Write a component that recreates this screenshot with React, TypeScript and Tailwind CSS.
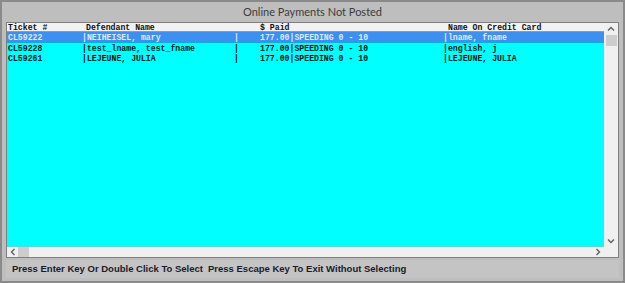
const mono = { fontFamily: '"Liberation Mono", "Courier New", monospace' };

type Row = { ticket: string; name: string; paid: string; card: string; selected?: boolean };

const rows: Row[] = [
  { ticket: 'CL59222', name: '|NEIHEISEL, mary', paid: '177.00|SPEEDING 0 - 10', card: '|lname, fname', selected: true },
  { ticket: 'CL59228', name: '|test_lname, test_fname', paid: '177.00|SPEEDING 0 - 10', card: '|english, j' },
  { ticket: 'CL59261', name: '|LEJEUNE, JULIA', paid: '177.00|SPEEDING 0 - 10', card: '|LEJEUNE, JULIA' },
];

function ListRow({ r }: { r: Row }) {
  return (
    <div
      className={`flex items-center whitespace-pre pt-[2px] font-bold leading-none ${
        r.selected ? 'h-[11px] bg-[#3d8ff0] text-[#dfe9ff]' : 'h-[10px] text-[#101010]'
      }`}
    >
      <span className="w-[75px] pl-[1px]">{r.ticket}</span>
      <span className="w-[152px]">{r.name}</span>
      <span className="w-[26px]">|</span>
      <span className="w-[183px]">{r.paid}</span>
      <span>{r.card}</span>
    </div>
  );
}

export default function App() {
  return (
    <div
      className="flex h-[283px] w-[625px] flex-col border-2 border-[#8a8a8a] bg-[#bebebe]"
      style={{ fontFamily: '"Liberation Sans", Arial, sans-serif' }}
    >
      <div className="flex h-[20px] items-center justify-center pt-[1px] text-[11px] text-[#3c3c3c]" style={{ fontFamily: 'Lato, "Noto Sans", sans-serif' }}>
        Online Payments Not Posted
      </div>
      <div className="mx-[4px] flex h-[236px] flex-col border border-[#7f7f7f] bg-[#f0f0f0]">
        <div className="flex min-h-0 flex-1">
          <div className="flex flex-1 flex-col text-[8.2px]" style={mono}>
            <div className="flex h-[9px] items-center whitespace-pre border-b border-[#9a9a9a] bg-[#f2f2f2] pt-[3px] font-bold leading-none text-[#101010]">
              <span className="w-[79px] pl-[1px]">Ticket #</span>
              <span className="w-[174px]">Defendant Name</span>
              <span className="w-[188px]">$ Paid</span>
              <span>Name On Credit Card</span>
            </div>
            <div className="flex-1 bg-[#00ffff]">
              {rows.map((r) => (
                <ListRow key={r.ticket} r={r} />
              ))}
            </div>
          </div>
          <div className="flex w-[14px] flex-col items-center bg-[#f0f0f0]">
            <svg width="8" height="8" viewBox="0 0 8 8" className="mt-[2px]">
              <path d="M1 5.5 L4 2.5 L7 5.5" fill="none" stroke="#606060" strokeWidth="1.4" />
            </svg>
            <div className="mt-[2px] h-[11px] w-[11px] bg-[#cdcdcd]" />
            <div className="flex-1" />
            <svg width="8" height="8" viewBox="0 0 8 8" className="mb-[2px]">
              <path d="M1 2.5 L4 5.5 L7 2.5" fill="none" stroke="#606060" strokeWidth="1.4" />
            </svg>
          </div>
        </div>
        <div className="flex h-[10px] items-center bg-[#f0f0f0] pr-[14px]">
          <svg width="8" height="8" viewBox="0 0 8 8" className="ml-[2px]">
            <path d="M5.5 1 L2.5 4 L5.5 7" fill="none" stroke="#606060" strokeWidth="1.4" />
          </svg>
          <div className="ml-[1px] h-[10px] w-[11px] bg-[#cdcdcd]" />
          <div className="flex-1" />
          <svg width="8" height="8" viewBox="0 0 8 8" className="mr-[2px]">
            <path d="M2.5 1 L5.5 4 L2.5 7" fill="none" stroke="#606060" strokeWidth="1.4" />
          </svg>
        </div>
      </div>
      <div className="mx-[4px] mt-[2px] flex h-[18px] items-center bg-[#c4c4c4] pt-[1px] text-[9.5px] font-bold text-[#1a1a2a]">
        <span className="ml-[6px] w-[196px]">Press Enter Key Or Double Click To Select</span>
        <span>Press Escape Key To Exit Without Selecting</span>
      </div>
    </div>
  );
}
